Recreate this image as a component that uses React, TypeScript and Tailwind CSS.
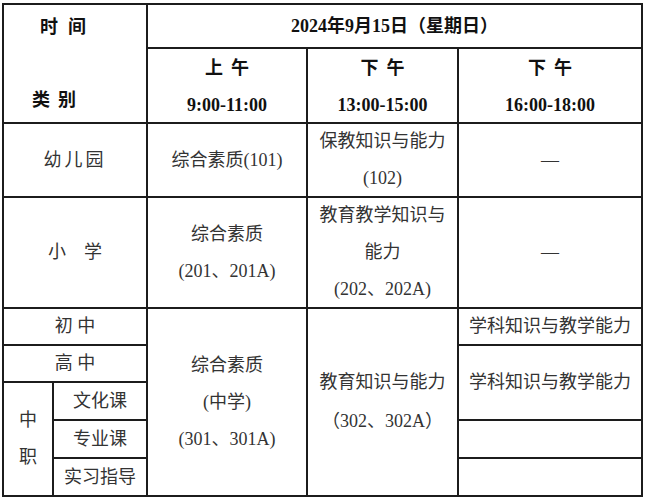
export default function App() {
  const font = { fontFamily: '"Liberation Serif", "Noto Sans CJK SC", serif' };
  const cell = "bg-white flex flex-col items-center justify-center text-[18px] text-[#333] leading-[37px]";
  const head = "bg-white flex flex-col items-center justify-center text-[18px] text-[#111] font-bold";

  return (
    <div className="w-[646px] h-[500px] bg-white pt-[3px] pl-[2px]" style={font}>
      <div className="grid w-[641px] h-[494px] gap-[2px] p-[2px] bg-[#1c1c1c] grid-cols-[48px_92px_158px_149px_182px] grid-rows-[42px_73px_72px_109px_35px_35px_36px_36px_36px]">
        {/* corner header */}
        <div className="col-span-2 row-span-2 bg-white flex flex-col justify-between text-[18px] text-[#111] font-bold leading-[24px] pt-[10px] pb-[10px]">
          <div className="flex gap-[10px] pl-[36px]">
            <span>时</span>
            <span>间</span>
          </div>
          <div className="flex gap-[8px] pl-[28px]">
            <span>类</span>
            <span>别</span>
          </div>
        </div>
        <div className={`${head} col-span-3`}>2024年9月15日（星期日）</div>

        <div className={`${head} gap-[10px] pt-[3px]`}>
          <span className="tracking-[8px] pl-[8px]">上午</span>
          <span>9:00-11:00</span>
        </div>
        <div className={`${head} gap-[10px] pt-[3px]`}>
          <span className="tracking-[8px] pl-[8px]">下午</span>
          <span>13:00-15:00</span>
        </div>
        <div className={`${head} gap-[10px] pt-[3px]`}>
          <span className="tracking-[8px] pl-[8px]">下午</span>
          <span>16:00-18:00</span>
        </div>

        {/* 幼儿园 */}
        <div className={`${cell} col-span-2 tracking-[3px]`}>幼儿园</div>
        <div className={cell}>综合素质(101)</div>
        <div className={cell}>
          <span>保教知识与能力</span>
          <span>(102)</span>
        </div>
        <div className={cell}>—</div>

        {/* 小学 */}
        <div className={`${cell} col-span-2`}>小　学</div>
        <div className={cell}>
          <span>综合素质</span>
          <span>(201、201A)</span>
        </div>
        <div className={cell}>
          <span>教育教学知识与</span>
          <span>能力</span>
          <span>(202、202A)</span>
        </div>
        <div className={cell}>—</div>

        {/* 初中 */}
        <div className={`${cell} col-span-2`}>初 中</div>
        <div className={`${cell} row-span-5`}>
          <span>综合素质</span>
          <span>(中学)</span>
          <span>(301、301A)</span>
        </div>
        <div className={`${cell} row-span-5 leading-[39px]`}>
          <span>教育知识与能力</span>
          <span>（302、302A）</span>
        </div>
        <div className={cell}>学科知识与教学能力</div>

        {/* 高中 */}
        <div className={`${cell} col-span-2`}>高 中</div>
        <div className={`${cell} row-span-2`}>学科知识与教学能力</div>

        {/* 中职 */}
        <div className={`${cell} row-span-3`}>
          <span>中</span>
          <span>职</span>
        </div>
        <div className={cell}>文化课</div>
        <div className={cell}>专业课</div>
        <div className={cell}></div>
        <div className={cell}>实习指导</div>
        <div className={cell}></div>
      </div>
    </div>
  );
}
